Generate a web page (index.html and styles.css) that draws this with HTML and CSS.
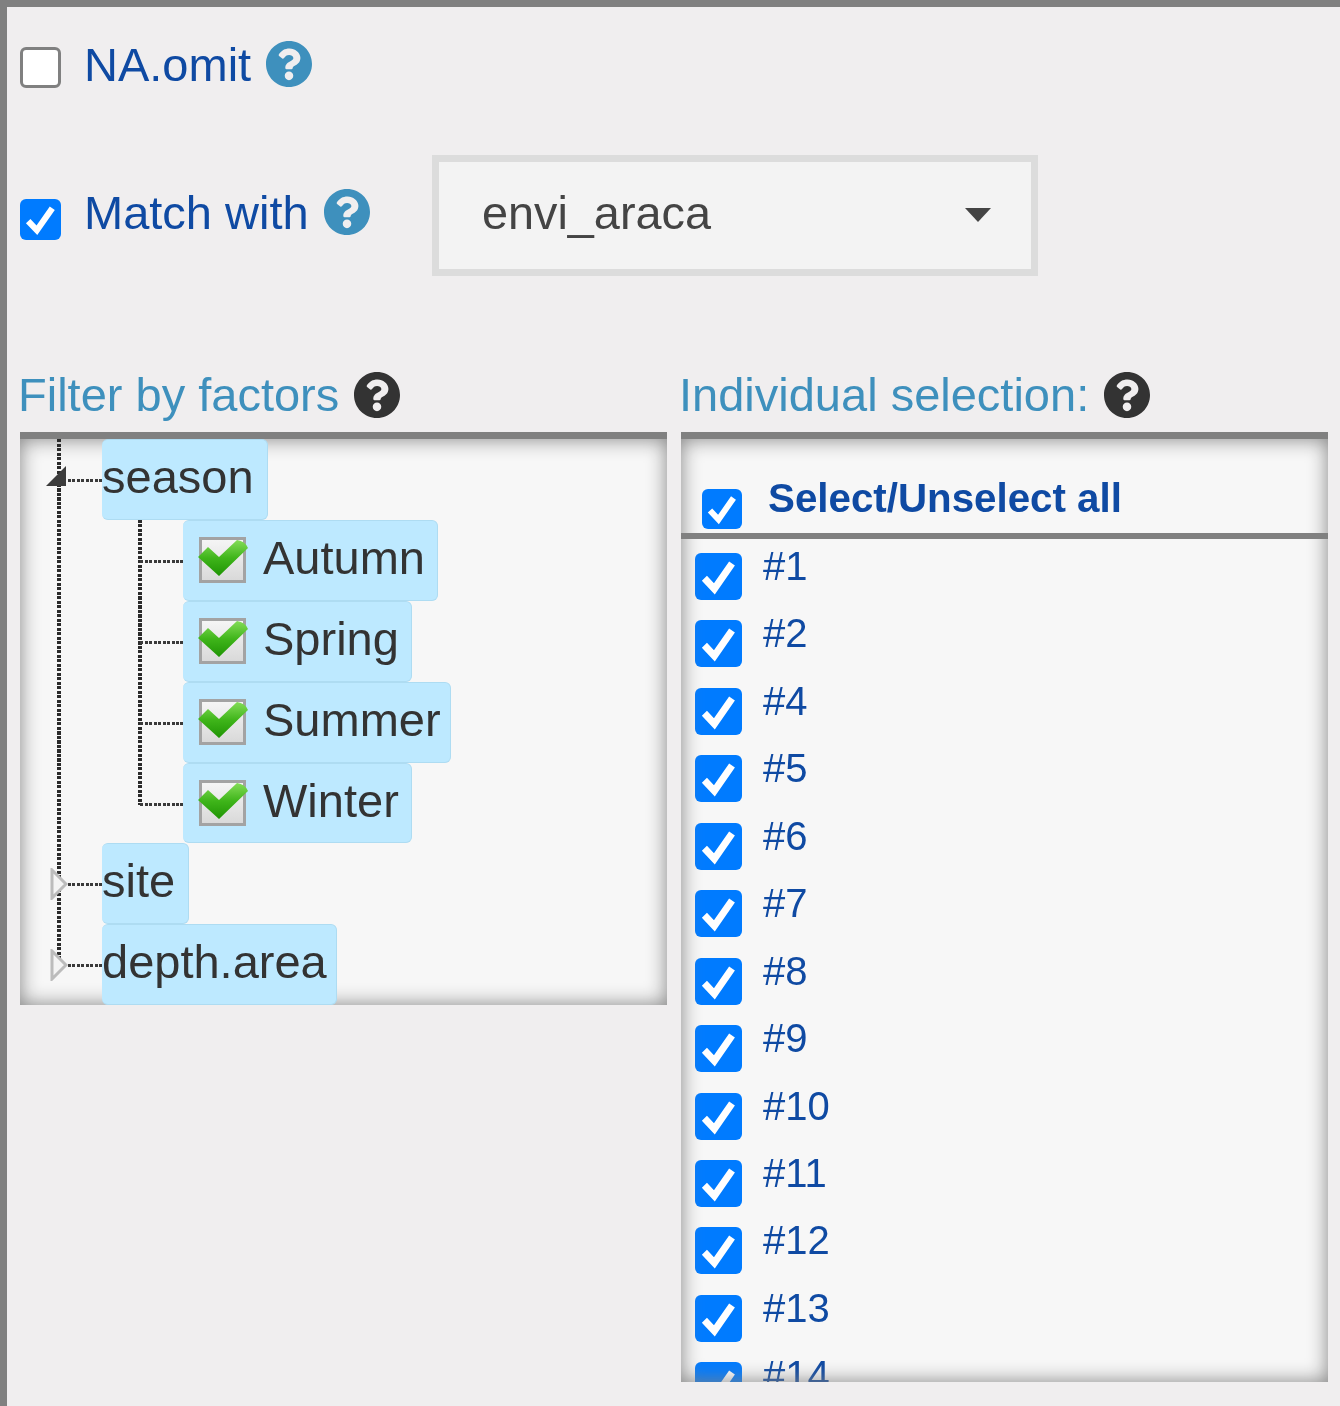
FILE: index.html
```html
<html>
    <head>
        <meta name="viewport" content="width=device-width, initial-scale=1.0">
        <link rel="stylesheet" href="styles.css">
    </head>
    <body>
        <svg class="defs" width="0" height="0">
            <defs>
                <symbol id="tick" viewBox="0 0 40 40">
                    <polyline points="8,21.5 16.5,30.5 31.5,9" fill="none" stroke="#fff" stroke-width="6"/>
                </symbol>
                <symbol id="help" viewBox="8 8 496 496">
                    <path d="M504 256c0 136.997-111.043 248-248 248S8 392.997 8 256C8 119.083 119.043 8 256 8s248 111.083 248 248zM262.655 90c-54.497 0-89.255 22.957-116.549 63.758-3.536 5.286-2.353 12.415 2.715 16.258l34.699 26.31c5.205 3.947 12.621 3.008 16.665-2.122 17.864-22.658 30.113-35.797 57.303-35.797 20.429 0 45.698 13.148 45.698 32.958 0 14.976-12.363 22.667-32.534 33.976C247.128 238.528 216 254.941 216 296v4c0 6.627 5.373 12 12 12h56c6.627 0 12-5.373 12-12v-1.333c0-28.462 83.186-29.647 83.186-106.667 0-58.002-60.165-102-116.531-102zM256 338c-25.365 0-46 20.635-46 46 0 25.364 20.635 46 46 46s46-20.636 46-46c0-25.365-20.635-46-46-46z"/>
                </symbol>
                <linearGradient id="box-fill" x1="0" y1="0" x2="0" y2="1">
                    <stop offset="0" stop-color="#f6f6f6"/>
                    <stop offset="1" stop-color="#d8d8d8"/>
                </linearGradient>
                <linearGradient id="green-fill" x1="0" y1="0" x2="0" y2="1">
                    <stop offset="0" stop-color="#84dc58"/>
                    <stop offset="0.5" stop-color="#3fb51a"/>
                    <stop offset="1" stop-color="#1f9404"/>
                </linearGradient>
                <symbol id="tree-check" viewBox="0 0 50 50">
                    <rect x="2.5" y="3.5" width="44" height="43" fill="url(#box-fill)" stroke="#a3a3a3" stroke-width="3"/>
                    <path d="M0 22 L10 12 L21 22 L39 5 Q47 6 50 13 L21 41 Z" fill="url(#green-fill)"/>
                </symbol>
            </defs>
        </svg>

        <div class="page">
            <div class="option option-na">
                <span class="box box-empty"></span>
                <label class="option-label">NA.omit</label>
                <svg class="help help-blue"><use href="#help"/></svg>
            </div>

            <div class="option option-match">
                <div class="match-label">
                    <span class="box box-on"><svg><use href="#tick"/></svg></span>
                    <label class="option-label">Match with</label>
                    <svg class="help help-blue"><use href="#help"/></svg>
                </div>
                <div class="select">
                    <span>envi_araca</span>
                    <i class="caret"></i>
                </div>
            </div>

            <div class="columns">
                <div class="column">
                    <div class="title">Filter by factors <svg class="help help-dark"><use href="#help"/></svg></div>
                    <div class="frame frame-tree">
                        <ul class="tree">
                            <li class="open">
                                <svg class="arrow arrow-open" viewBox="0 0 22 22"><path d="M21 1 V21 H1 Z" fill="#3c3c3c"/></svg>
                                <span class="node">season</span>
                                <ul class="tree-sub">
                                    <li><span class="node node-leaf"><svg class="leaf-check"><use href="#tree-check"/></svg>Autumn</span></li>
                                    <li><span class="node node-leaf"><svg class="leaf-check"><use href="#tree-check"/></svg>Spring</span></li>
                                    <li><span class="node node-leaf node-tight"><svg class="leaf-check"><use href="#tree-check"/></svg>Summer</span></li>
                                    <li><span class="node node-leaf"><svg class="leaf-check"><use href="#tree-check"/></svg>Winter</span></li>
                                </ul>
                            </li>
                            <li>
                                <svg class="arrow arrow-closed" viewBox="0 0 18 32"><path d="M2 2 L16 16 L2 30 Z" fill="#f4f4f4" stroke="#bcbcbc" stroke-width="3"/></svg>
                                <span class="node">site</span>
                            </li>
                            <li>
                                <svg class="arrow arrow-closed" viewBox="0 0 18 32"><path d="M2 2 L16 16 L2 30 Z" fill="#f4f4f4" stroke="#bcbcbc" stroke-width="3"/></svg>
                                <span class="node node-tight">depth.area</span>
                            </li>
                        </ul>
                    </div>
                </div>

                <div class="column">
                    <div class="title">Individual selection: <svg class="help help-dark"><use href="#help"/></svg></div>
                    <div class="frame frame-list">
                        <div class="list-head">
                            <span class="box box-on"><svg><use href="#tick"/></svg></span>
                            <b>Select/Unselect all</b>
                        </div>
                        <div class="list">
                            <div class="item"><span class="box box-on"><svg><use href="#tick"/></svg></span>#1</div>
                            <div class="item"><span class="box box-on"><svg><use href="#tick"/></svg></span>#2</div>
                            <div class="item"><span class="box box-on"><svg><use href="#tick"/></svg></span>#4</div>
                            <div class="item"><span class="box box-on"><svg><use href="#tick"/></svg></span>#5</div>
                            <div class="item"><span class="box box-on"><svg><use href="#tick"/></svg></span>#6</div>
                            <div class="item"><span class="box box-on"><svg><use href="#tick"/></svg></span>#7</div>
                            <div class="item"><span class="box box-on"><svg><use href="#tick"/></svg></span>#8</div>
                            <div class="item"><span class="box box-on"><svg><use href="#tick"/></svg></span>#9</div>
                            <div class="item"><span class="box box-on"><svg><use href="#tick"/></svg></span>#10</div>
                            <div class="item"><span class="box box-on"><svg><use href="#tick"/></svg></span>#11</div>
                            <div class="item"><span class="box box-on"><svg><use href="#tick"/></svg></span>#12</div>
                            <div class="item"><span class="box box-on"><svg><use href="#tick"/></svg></span>#13</div>
                            <div class="item"><span class="box box-on"><svg><use href="#tick"/></svg></span>#14</div>
                        </div>
                    </div>
                </div>
            </div>
        </div>
    </body>
</html>
```

FILE: styles.css
```css
html, body {
    margin: 0;
    padding: 0;
    font-family: "Liberation Sans", Arial, sans-serif;
    background: #f0eeef;
}
.defs {
    position: absolute;
}
.page {
    box-sizing: border-box;
    height: 1406px;
    overflow: hidden;
    border-top: 7px solid #808080;
    border-left: 7px solid #808080;
    padding-left: 13px;
    filter: blur(0.4px);
}

/* checkboxes */
.box {
    display: block;
    flex: none;
    box-sizing: border-box;
    border-radius: 6px;
}
.box svg {
    display: block;
    width: 100%;
    height: 100%;
}
.box-on {
    background: #007bff;
}
.box-empty {
    background: #fff;
    border: 3px solid #808080;
}

/* top options */
.option {
    display: flex;
}
.option .box {
    width: 41px;
    height: 41px;
}
.option-label {
    font-size: 47px;
    line-height: 54px;
    color: #0f4aa3;
    margin-left: 23px;
}
.help {
    display: block;
    flex: none;
    width: 46px;
    height: 46px;
}
.help-blue {
    fill: #3e90bd;
    margin-left: 15px;
}
.help-dark {
    fill: #333;
}
.option-na {
    margin-top: 34px;
    height: 47px;
}
.option-na .box {
    margin-top: 6px;
}
.option-na .option-label {
    margin-top: -3px;
}
.option-match {
    margin-top: 67px;
    height: 121px;
}
.match-label {
    display: flex;
    width: 412px;
    padding-top: 34px;
}
.match-label .box {
    margin-top: 10px;
}
.match-label .option-label {
    margin-top: -3px;
}
.select {
    box-sizing: border-box;
    width: 606px;
    height: 121px;
    border: 7px solid #dcdcdc;
    background: #f3f3f3;
    display: flex;
    align-items: center;
    justify-content: space-between;
    padding: 0 40px 6px 43px;
    font-size: 46.8px;
    color: #444;
}
.caret {
    width: 0;
    height: 0;
    margin-top: 4px;
    border-left: 13.5px solid transparent;
    border-right: 13.5px solid transparent;
    border-top: 14px solid #444;
}

/* two columns */
.columns {
    display: flex;
    gap: 14px;
    margin-top: 90px;
}
.column {
    width: 647px;
}
.title {
    display: flex;
    align-items: center;
    box-sizing: border-box;
    height: 66px;
    padding-bottom: 9px;
    margin-left: -2px;
    font-size: 47px;
    white-space: pre;
    color: #3e90bd;
}
.title .help {
    margin-left: 2px;
}
.frame {
    position: relative;
    box-sizing: border-box;
    border-top: 7px solid #808080;
    background: #f7f7f7;
    overflow: hidden;
}
.frame::after {
    content: "";
    position: absolute;
    inset: 0;
    box-shadow: inset 0 0 20px #808080;
    pointer-events: none;
}

/* tree */
.frame-tree {
    height: 573px;
}
.tree, .tree-sub {
    list-style: none;
    margin: 0;
    padding: 0;
}
.tree {
    position: relative;
    z-index: 1;
    padding-left: 82px;
}
.tree::before, .tree-sub::before {
    content: "";
    position: absolute;
    width: 4px;
    background: repeating-linear-gradient(#2b2b2b 0 3px, transparent 3px 4.5px);
}
.tree::before {
    left: 37px;
    top: 0;
    height: 527px;
}
.tree-sub {
    position: relative;
    padding-left: 81px;
}
.tree-sub::before {
    left: 36px;
    top: 0;
    height: 285px;
}
.tree li {
    position: relative;
}
.tree li::before {
    content: "";
    position: absolute;
    left: -34px;
    top: 40px;
    width: 34px;
    height: 3px;
    background: repeating-linear-gradient(90deg, #3a3a3a 0 3px, transparent 3px 4.5px);
}
.tree-sub li::before {
    left: -43px;
    width: 43px;
}
.arrow {
    position: absolute;
    z-index: 1;
}
.arrow-open {
    left: -57px;
    top: 26px;
    width: 22px;
    height: 22px;
}
.arrow-closed {
    left: -52px;
    top: 25px;
    width: 18px;
    height: 32px;
}
.node {
    box-sizing: border-box;
    display: inline-flex;
    align-items: center;
    height: 80.9px;
    padding: 0 13px 6px 0;
    background: #bde9ff;
    border: 1px solid #aedcf2;
    border-left: 0;
    border-radius: 6px;
    font-size: 47px;
    color: #333;
    vertical-align: top;
}
.node-tight {
    padding-right: 9px;
}
.node-leaf {
    padding-left: 15px;
    padding-right: 12px;
}
.node-leaf.node-tight {
    padding-right: 9px;
}
.leaf-check {
    width: 50px;
    height: 50px;
    margin-top: 6px;
    margin-right: 15px;
}
.tree > li {
    min-height: 80.9px;
}

/* individual selection */
.frame-list {
    height: 950px;
}
.list-head {
    display: flex;
    height: 94px;
    padding-left: 21px;
    border-bottom: 6px solid #808080;
    color: #0f4aa3;
    font-size: 40.3px;
}
.list-head .box {
    width: 40px;
    height: 40px;
    margin-top: 50px;
}
.list-head b {
    margin-left: 26px;
    margin-top: 37px;
}
.list {
    padding: 14px 0 0 14px;
}
.item {
    display: flex;
    height: 67.45px;
    font-size: 40px;
    line-height: 26px;
    color: #0f4aa3;
}
.item .box {
    width: 47px;
    height: 47px;
    margin-right: 21px;
}
```
